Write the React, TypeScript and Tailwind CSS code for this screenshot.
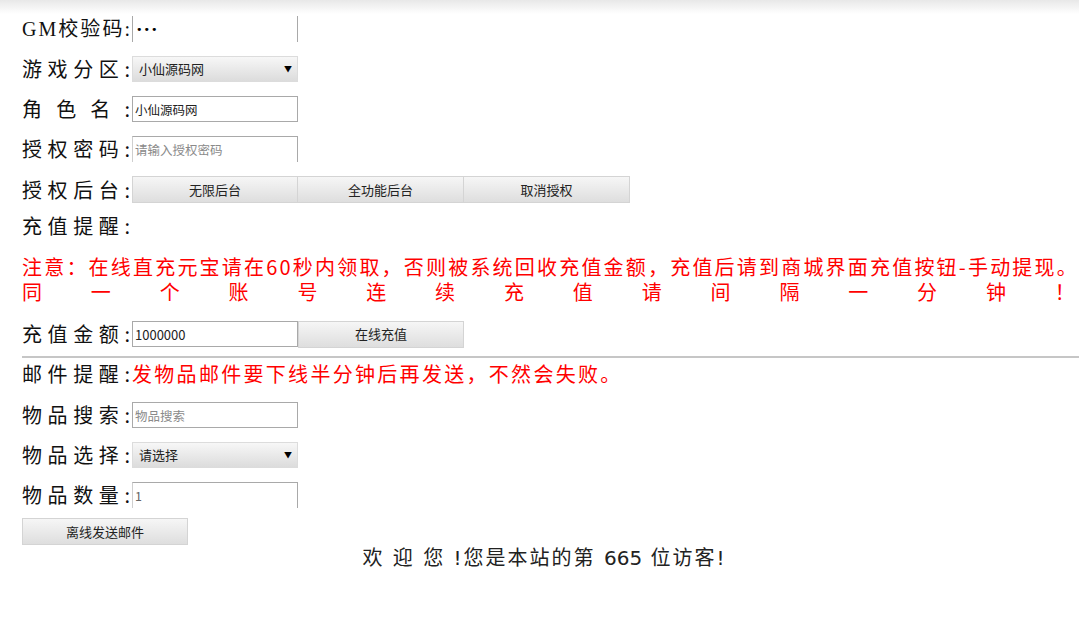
import React from 'react';

const cjk = "font-['Noto_Sans_CJK_SC',sans-serif]";

const Label: React.FC<{ text: string; serif?: boolean }> = ({ text, serif }) => (
  <span
    className={`inline-block w-[110px] shrink-0 text-[20px] leading-[26px] tracking-[2px] text-[#111] text-justify [text-align-last:justify] ${
      serif ? "font-['Liberation_Serif','Noto_Sans_CJK_SC',serif]" : cjk
    }`}
  >
    {text}
  </span>
);

const Btn: React.FC<{ text: string; className?: string }> = ({ text, className = '' }) => (
  <button
    className={`h-[27px] w-[166px] bg-gradient-to-b from-[#f6f6f6] to-[#dedede] border border-[#d4d4d4] text-[13px] text-[#222] ${cjk} ${className}`}
  >
    {text}
  </button>
);

const FakeSelect: React.FC<{ text: string }> = ({ text }) => (
  <div
    className={`flex h-[26px] w-[166px] items-center justify-between bg-gradient-to-b from-[#f7f7f7] to-[#dcdcdc] border border-[#dcdcdc] pl-[6px] pr-[5px] text-[13px] text-[#222] ${cjk}`}
  >
    <span>{text}</span>
    <span className="text-[8px] text-black">▼</span>
  </div>
);

const inputBase = `h-[26px] w-[166px] bg-white pl-[2px] text-[12.5px] text-[#222] outline-none placeholder:text-[#8a8a8a] border-[#a9a9a9] ${cjk}`;

export default function App() {
  return (
    <div className="min-h-[642px] w-full bg-white">
      <div className="h-[14px] bg-gradient-to-b from-[#e8e8e8] to-white" />
      <div className="flex flex-col pl-[22px]">
        <div className="mt-[2px] flex h-[26px] items-center">
          <Label text="GM校验码:" serif />
          <div className="flex h-[26px] w-[166px] items-center border-x border-[#a9a9a9] pl-[3px] text-[11px] leading-none tracking-[1px] text-black font-['DejaVu_Sans',sans-serif]">
            •••
          </div>
        </div>

        <div className="mt-[14px] flex h-[26px] items-center">
          <Label text="游戏分区:" />
          <FakeSelect text="小仙源码网" />
        </div>

        <div className="mt-[14px] flex h-[26px] items-center">
          <Label text="角色名:" />
          <input className={`${inputBase} border`} defaultValue="小仙源码网" />
        </div>

        <div className="mt-[14px] flex h-[26px] items-center">
          <Label text="授权密码:" />
          <input className={`${inputBase} border-x border-t border-l-[#cfcfcf]`} placeholder="请输入授权密码" />
        </div>

        <div className="mt-[14px] flex h-[27px] items-center">
          <Label text="授权后台:" />
          <Btn text="无限后台" />
          <Btn text="全功能后台" className="border-l-0" />
          <Btn text="取消授权" className="border-l-0" />
        </div>

        <div className="mt-[10px] flex h-[26px] items-center">
          <Label text="充值提醒:" />
        </div>

        <div className={`mt-[15px] pr-[2px] text-[20px] leading-[25px] tracking-[2.2px] text-[#ff0000] ${cjk}`}>
          <div className="whitespace-nowrap">注意：在线直充元宝请在60秒内领取，否则被系统回收充值金额，充值后请到商城界面充值按钮-手动提现。</div>
          <div className="text-justify [text-align-last:justify]">同一个账号连续充值请间隔一分钟！</div>
        </div>

        <div className="mt-[17px] flex h-[26px] items-center">
          <Label text="充值金额:" />
          <input className={`${inputBase} border text-[13px]`} defaultValue="1000000" />
          <Btn text="在线充值" className="h-[26px]" />
        </div>

        <div className="mt-[9px] border-t-2 border-[#c6c6c6]" />

        <div className="mt-[3px] flex h-[26px] items-center">
          <Label text="邮件提醒:" />
          <span className={`text-[20px] leading-[26px] tracking-[2.3px] text-[#ff0000] whitespace-nowrap ${cjk}`}>
            发物品邮件要下线半分钟后再发送，不然会失败。
          </span>
        </div>

        <div className="mt-[15px] flex h-[26px] items-center">
          <Label text="物品搜索:" />
          <input className={`${inputBase} border`} placeholder="物品搜索" />
        </div>

        <div className="mt-[14px] flex h-[26px] items-center">
          <Label text="物品选择:" />
          <FakeSelect text="请选择" />
        </div>

        <div className="mt-[14px] flex h-[26px] items-center">
          <Label text="物品数量:" />
          <input className={`${inputBase} border-x border-t border-l-[#cfcfcf] text-[#666]`} defaultValue="1" />
        </div>

        <div className="mt-[10px]">
          <Btn text="离线发送邮件" />
        </div>

        <div className="pr-[12px] text-center text-[20px] leading-[26px] tracking-[2px] text-[#222] font-['DejaVu_Sans','Noto_Sans_CJK_SC',sans-serif]">
          欢 迎 您 !您是本站的第 <span className="tracking-normal">665</span> 位访客!
        </div>
      </div>
    </div>
  );
}
